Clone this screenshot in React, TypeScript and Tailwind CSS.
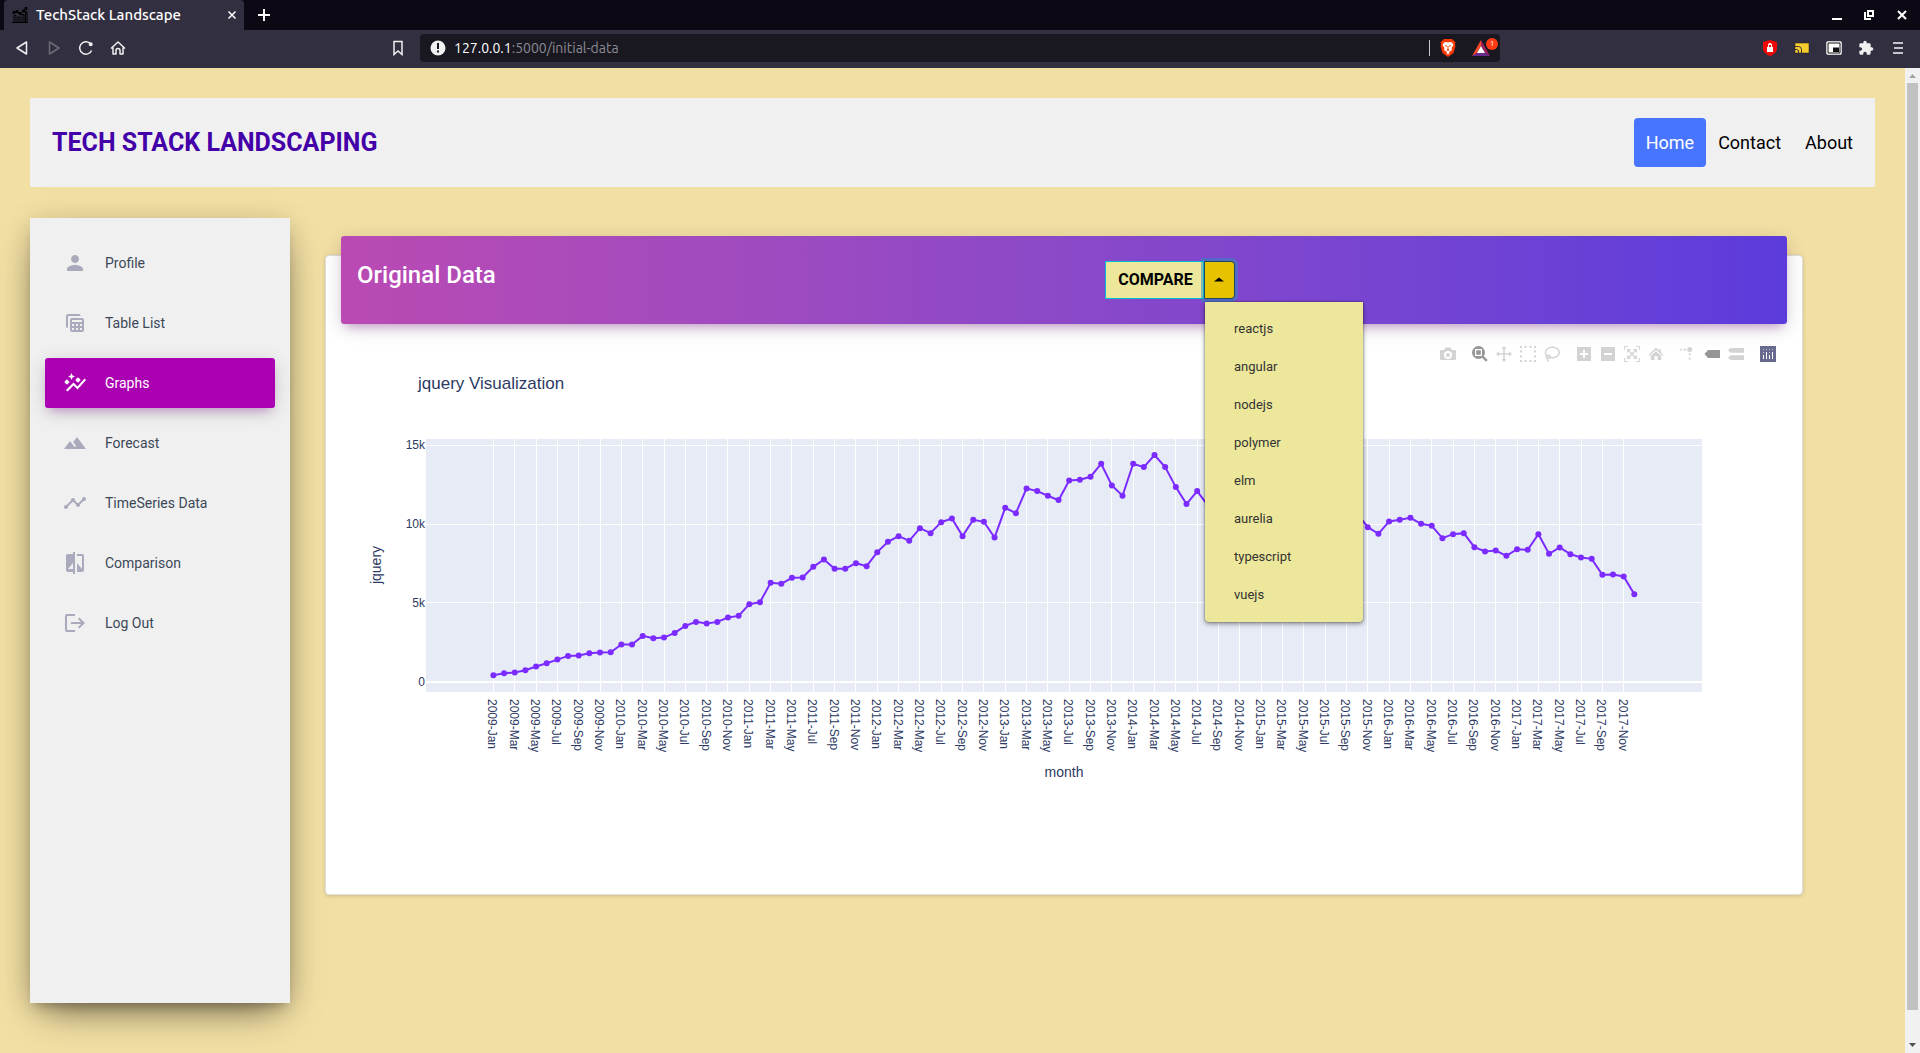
import React from "react";

type IconProps = { className?: string };

const series = [
  410, 536, 579, 727, 960, 1171, 1404, 1637, 1658, 1806, 1849, 1870, 2357, 2357, 2907, 2759, 2801, 3098,
  3542, 3796, 3691, 3796, 4072, 4177, 4918, 5045, 6273, 6210, 6591, 6612, 7289, 7755, 7161, 7161, 7521,
  7330, 8220, 8876, 9236, 8939, 9744, 9426, 10125, 10358, 9236, 10273, 10146, 9151, 11035, 10696, 12263,
  12094, 11797, 11522, 12771, 12813, 13004, 13830, 12454, 11797, 13830, 13618, 14380, 13618, 12348, 11268,
  12094, 11183, 11600, 11900, 11500, 11000, 11400, 11700, 11200, 10900, 11300, 11000, 10700, 11100, 10900,
  10675, 9807, 9384, 10167, 10273, 10400, 10019, 9892, 9109, 9363, 9426, 8537, 8262, 8325, 7987, 8410,
  8368, 9363, 8114, 8516, 8093, 7881, 7796, 6780, 6801, 6674, 5552,
];

const tickMonths = ["Jan", "Mar", "May", "Jul", "Sep", "Nov"];
const xAt = (i: number) => 152.4 + i * 10.663;
const yAt = (v: number) => 347.7 - (v / 5000) * 78.8;

function Chart() {
  return (
    <svg viewBox="0 0 1446 450" className="block w-full" role="img" aria-label="jquery Visualization" fontFamily="'Liberation Sans', Arial, sans-serif" fill="#2d3a64">
      <text x="77" y="55" fontSize="17">jquery Visualization</text>
      <rect x="85" y="105" width="1276" height="253" fill="#e6ebf5" />
      {series.map((_, i) =>
        i % 2 === 0 ? (
          <path key={i} d={`M${Math.floor(xAt(i)) + 0.5} 105V358`} stroke="#fff" />
        ) : null,
      )}
      {[5000, 10000, 15000].map((v) => (
        <path key={v} d={`M85 ${Math.floor(yAt(v)) + 0.5}H1361`} stroke="#fff" />
      ))}
      <path d="M85 348H1361" stroke="#fff" strokeWidth="2" />
      <polyline points={series.map((v, i) => `${xAt(i)},${yAt(v)}`).join(" ")} fill="none" stroke="#7b2bff" strokeWidth="2" />
      {series.map((v, i) => (
        <circle key={i} cx={xAt(i)} cy={yAt(v)} r="3" fill="#7b2bff" />
      ))}
      {["0", "5k", "10k", "15k"].map((label, i) => (
        <text key={label} x="84" y={yAt(i * 5000) + 4} fontSize="12" textAnchor="end">{label}</text>
      ))}
      {series.map((_, i) =>
        i % 2 === 0 ? (
          <text key={i} transform={`translate(${xAt(i) - 5} 365) rotate(90)`} fontSize="12">
            {`${2009 + Math.floor(i / 12)}-${tickMonths[(i % 12) / 2]}`}
          </text>
        ) : null,
      )}
      <text x="723" y="443" fontSize="14" textAnchor="middle">month</text>
      <text transform="translate(40 231) rotate(-90)" fontSize="14" textAnchor="middle">jquery</text>
    </svg>
  );
}

const navIcons: Record<string, React.ReactNode> = {
  Profile: <path d="M12 12c2.21 0 4-1.79 4-4s-1.79-4-4-4-4 1.79-4 4 1.79 4 4 4zm0 2c-2.67 0-8 1.34-8 4v2h16v-2c0-2.66-5.33-4-8-4z" />,
  "Table List": (
    <path fillRule="evenodd" d="M5 3h11a2 2 0 0 1 1.700 2H5v12a2 2 0 0 1-2-2V5a2 2 0 0 1 2-2zM9 7h10a2 2 0 0 1 2 2v10a2 2 0 0 1-2 2H9a2 2 0 0 1-2-2V9a2 2 0 0 1 2-2zM9 9v2h10V9zM9 13v2h2v-2zM13 13v2h2v-2zM17 13v2h2v-2zM9 17v2h2v-2zM13 17v2h2v-2zM17 17v2h2v-2z" />
  ),
  Graphs: (
    <>
      <path d="M14.060 9.940 12 9l2.060-.94L15 6l.94 2.060L18 9l-2.060.94L15 12zM4 14l.94-2.060L7 11l-2.060-.94L4 8l-.94 2.060L1 11l2.060.94zM8.500 9l1.090-2.410L12 5.500 9.590 4.410 8.500 2 7.410 4.410 5 5.500l2.410 1.090zM4.500 20.500l6-6.010 4 4L23 8.930l-1.410-1.410-7.090 7.970-4-4L3 19z" />
      <circle cx="3.800" cy="11" r="2" />
      <circle cx="15" cy="9" r="2" />
    </>
  ),
  Forecast: <path d="m14 6-3.800 5 2.900 3.900-1.500 1.200L7 10l-6 8h22z" />,
  "TimeSeries Data": <path d="M23 8c0 1.100-.9 2-2 2-.18 0-.35-.02-.51-.07l-3.560 3.550c.05.16.07.34.07.52 0 1.100-.9 2-2 2s-2-.9-2-2c0-.18.02-.36.07-.52l-2.550-2.550c-.16.05-.34.07-.52.07s-.36-.02-.52-.07l-4.550 4.560c.05.16.07.33.07.51 0 1.100-.9 2-2 2s-2-.9-2-2 .9-2 2-2c.18 0 .35.02.51.07l4.560-4.550C8.020 9.360 8 9.180 8 9c0-1.100.9-2 2-2s2 .9 2 2c0 .18-.02.36-.07.52l2.550 2.550c.16-.05.34-.07.52-.07s.36.02.52.07l3.550-3.560C19.020 8.350 19 8.180 19 8c0-1.100.9-2 2-2s2 .9 2 2z" />,
  Comparison: <path d="M10 3H5c-1.100 0-2 .9-2 2v14c0 1.100.9 2 2 2h5v2h2V1h-2v2zm0 15H5l5-6v6zm9-15h-5v2h5v13l-5-6v9h5c1.100 0 2-.9 2-2V5c0-1.100-.9-2-2-2z" />,
  "Log Out": <path d="M4 3h8v2H4v14h8v2H4a2 2 0 0 1-2-2V5a2 2 0 0 1 2-2zM8 11h10l-3-3 1.400-1.400L22 12l-5.600 5.400L15 16l3-3H8z" />,
};

const navItems = ["Profile", "Table List", "Graphs", "Forecast", "TimeSeries Data", "Comparison", "Log Out"];

function Sidebar() {
  return (
    <nav aria-label="Sections" className="flex h-[785px] w-[260px] shrink-0 flex-col gap-2.5 bg-[#f0f0f0] px-[15px] pt-5 shadow-[0_16px_38px_-12px_rgba(0,0,0,0.56),0_4px_25px_0_rgba(0,0,0,0.12),0_8px_10px_-5px_rgba(0,0,0,0.2)]">
      {navItems.map((name) => {
        const active = name === "Graphs";
        return (
          <a
            key={name}
            href="#"
            aria-current={active ? "page" : undefined}
            className={
              active
                ? "flex h-[50px] items-center gap-[15px] rounded-[3px] bg-[#ab00b1] pl-[15px] text-sm text-white shadow-[0_4px_20px_0_rgba(0,0,0,0.14),0_7px_10px_-5px_rgba(156,39,176,0.4)]"
                : "flex h-[50px] items-center gap-[15px] rounded-[3px] pl-[15px] text-sm text-[#3c4858]"
            }
          >
            <span className="flex w-[30px] justify-center">
              <svg viewBox="0 0 24 24" className={active ? "size-6 fill-white" : "size-6 fill-[#a9abbd]"} aria-hidden="true">
                {navIcons[name]}
              </svg>
            </span>
            {name}
          </a>
        );
      })}
    </nav>
  );
}

const modebarGroups: { label: string; dark?: boolean; art: React.ReactNode }[][] = [
  [{ label: "Download plot", art: <path fillRule="evenodd" d="M1 4h3l1.500-2.500h5L12 4h3a1 1 0 0 1 1 1v8a1 1 0 0 1-1 1H1a1 1 0 0 1-1-1V5a1 1 0 0 1 1-1zM8 5a4 4 0 1 0 0 8 4 4 0 0 0 0-8zM8 7a2 2 0 1 1 0 4 2 2 0 0 1 0-4z" /> }],
  [
    { label: "Zoom", dark: true, art: <><path d="M10.500 10.500 14.800 14.800" stroke="currentColor" strokeWidth="2.400" /><path fillRule="evenodd" d="M6.500 0a6.500 6.500 0 1 1 0 13 6.500 6.500 0 0 1 0-13zM3 3v7h7V3zM4.200 4.200h4.600v4.600H4.200z" /></> },
    { label: "Pan", art: <path d="m8 0 2.500 3H8.800v4.200H13V5.500L16 8l-3 2.500V8.800H8.800V13h1.700L8 16l-2.500-3h1.700V8.800H3v1.700L0 8l3-2.500v1.700h4.200V3H5.500z" /> },
    { label: "Box select", art: <path d="M0 0h2v2H0zM4.500 0h2v2h-2zM9.500 0h2v2h-2zM14 0h2v2h-2zM0 4.500h2v2H0zM14 4.500h2v2h-2zM0 9.500h2v2H0zM14 9.500h2v2h-2zM0 14h2v2H0zM4.500 14h2v2h-2zM9.500 14h2v2h-2zM14 14h2v2h-2z" /> },
    { label: "Lasso select", art: <><ellipse cx="8.300" cy="6.500" rx="6.900" ry="5.300" fill="none" stroke="currentColor" strokeWidth="1.500" /><path d="M3 9.500c3-1.500 4.500 2 2 3-2.500.8-3.500-1.500-2-3zM3.500 12.300c-.5 1.500 0 2.700 1.300 3" fill="none" stroke="currentColor" strokeWidth="1.300" /></> },
  ],
  [
    { label: "Zoom in", art: <path fillRule="evenodd" d="M1 1h14v14H1zM7 4v3H4v2h3v3h2V9h3V7H9V4z" /> },
    { label: "Zoom out", art: <path fillRule="evenodd" d="M1 1h14v14H1zM4 7v2h8V7z" /> },
    { label: "Autoscale", art: <><path d="M.5 4V.5H4M12 .5h3.500V4M15.500 12v3.500H12M4 15.500H.5V12" fill="none" stroke="currentColor" /><path d="m4.500 4.500 7 7m0-7-7 7" stroke="currentColor" strokeWidth="1.500" /><path d="M3 3h4L3 7zM13 3v4L9 3zM13 13H9l4-4zM3 13V9l4 4z" /></> },
    { label: "Reset axes", art: <path d="M8 1.500 11.500 5V3H13v3.500L15.500 9l-.8.8L8 4 1.300 9.800.5 9zM8 5.200l5.200 4.600V14H9.500v-4h-3v4H2.800V9.800z" /> },
  ],
  [
    { label: "Toggle spike lines", art: <><circle cx="9.700" cy="3.500" r="2.500" /><path d="M0 2.700h1.700v1.700H0zM3.500 2.700H6v1.700H3.500zM8.800 7.300h1.800v2H8.800zM8.800 11.800h1.800v2H8.800z" /></> },
    { label: "Show closest data", dark: true, art: <path d="M.5 8 4 4h12v8H4z" /> },
    { label: "Compare data", art: <path d="M0 4.300 2.500 2H16v4.700H2.500zM0 11.700l2.500-2.400H16V14H2.500z" /> },
  ],
];

function Modebar() {
  return (
    <div className="flex items-center justify-end gap-4 pr-[11px] text-[#d3d3d3]">
      {modebarGroups.map((group, g) => (
        <div key={g} className="flex gap-2">
          {group.map((b) => (
            <button key={b.label} type="button" aria-label={b.label} className={b.dark ? "text-[#969696]" : ""}>
              <svg viewBox="0 0 16 16" className="size-4 fill-current">{b.art}</svg>
            </button>
          ))}
        </div>
      ))}
      <a href="#" aria-label="Produced with Plotly">
        <svg viewBox="0 0 16 16" className="size-4">
          <path fill="#69698f" d="M0 0h16v16H0z" />
          <path d="M3 9h1v4H3zM6 6h1v7H6zM9 9h1v4H9zM12 6h1v7h-1z" fill="#fff" />
          <path d="M3 3h1v1H3zM6 3h1v1H6zM9 3h1v1H9zM12 3h1v1h-1zM3 6h1v1H3zM9 6h1v1H9z" fill="#9fd6df" />
        </svg>
      </a>
    </div>
  );
}

function Compare() {
  const options = ["reactjs", "angular", "nodejs", "polymer", "elm", "aurelia", "typescript", "vuejs"];
  return (
    <div className="relative flex h-[38px] w-[130px]">
      <button type="button" className="w-[99px] border border-[#00bcd4] bg-[#ede79b] pl-0.5 text-base font-bold text-black">COMPARE</button>
      <button type="button" aria-label="Choose a technology" aria-expanded="true" className="flex flex-1 items-center justify-center rounded-r-[4px] border border-[#164a5c] bg-[#e6c200] pr-0.5 pb-0.5 shadow-[0_0_0_3px_rgba(38,143,190,0.5)]">
        <svg viewBox="0 0 10 5" className="h-[5px] w-2.5"><path d="M0 4.500 5 .5l5 4z" /></svg>
      </button>
      <ul className="absolute top-[41px] left-[100px] z-10 flex w-[158px] flex-col rounded-b-[4px] bg-[#ede79b] px-[29px] py-2 text-[13px] leading-[38px] text-[#333] shadow-[0_2px_5px_rgba(0,0,0,0.4),0_0_2px_rgba(0,0,0,0.5)]">
        {options.map((o) => (
          <li key={o}><a href="#">{o}</a></li>
        ))}
      </ul>
    </div>
  );
}

function ChromeIcon({ children, className = "size-4" }: IconProps & { children: React.ReactNode }) {
  return (
    <svg viewBox="0 0 16 16" className={className} fill="none" stroke="currentColor" strokeWidth="1.500" strokeLinejoin="round" aria-hidden="true">
      {children}
    </svg>
  );
}

function BrowserChrome() {
  return (
    <header className="bg-[#0c0915] text-white" style={{ fontFamily: "Ubuntu, 'Noto Sans', sans-serif" }}>
      <div className="flex h-[30px] items-center pl-1">
        <div className="flex h-full w-60 items-center gap-2 rounded-t-[4px] bg-[#322f40] pr-1 pl-2">
          <svg viewBox="0 0 16 16" className="size-4" fill="none" stroke="#000" aria-hidden="true">
            <path d="M0 15.500h16M2 15V8.500h2V15M6 15v-5h2v5M10 15V7.500h2V15M13.500 15V4.500h1.500V15M1.500 6 5 5l3 2 3.500-3 2.500-2.500" />
            <path d="M1 4.500h2v2H1zM4 3.500h2v2H4zM7 5.500h2v2H7zM10.500 3h2v2h-2zM13 .5h2v2h-2z" fill="#000" />
          </svg>
          <span className="flex-1 text-[15px] font-medium">TechStack Landscape</span>
          <button type="button" aria-label="Close tab"><ChromeIcon><path d="m4.500 4.500 7 7m0-7-7 7" /></ChromeIcon></button>
        </div>
        <button type="button" aria-label="New tab" className="ml-3"><ChromeIcon><path strokeWidth="2" d="M8 2v12M2 8h12" /></ChromeIcon></button>
        <div className="ml-auto flex gap-4 pr-2.5">
          <button type="button" aria-label="Minimize"><ChromeIcon><path strokeWidth="2" d="M2 12h10" /></ChromeIcon></button>
          <button type="button" aria-label="Restore"><ChromeIcon><path strokeWidth="2" strokeLinejoin="miter" d="M6 4h5v5H6zM3 5v7h6" /></ChromeIcon></button>
          <button type="button" aria-label="Close"><ChromeIcon><path strokeWidth="2" d="m4 4 8 8m0-8-8 8" /></ChromeIcon></button>
        </div>
      </div>
      <div className="flex h-[38px] items-center bg-[#322f40] pb-0.5 text-[#f0f0f0]">
        <div className="flex gap-4 pl-3.5">
          <button type="button" aria-label="Back"><ChromeIcon><path d="M12.500 2v12L3 8z" /></ChromeIcon></button>
          <button type="button" aria-label="Forward" className="text-[#6c6a77]"><ChromeIcon><path d="M3.500 2v12L13 8z" /></ChromeIcon></button>
          <button type="button" aria-label="Reload"><ChromeIcon><path d="M13.600 10.500A6.200 6.200 0 1 1 12 3.300" /><circle cx="12.700" cy="4.300" r="1.300" fill="currentColor" /></ChromeIcon></button>
          <button type="button" aria-label="Home"><ChromeIcon><path d="M1 8.500 8 2l7 6.500M3 7.500V14h3v-3.500a2 2 0 0 1 4 0V14h3V7.500" /></ChromeIcon></button>
        </div>
        <button type="button" aria-label="Bookmark" className="ml-[264px]"><ChromeIcon><path strokeLinejoin="miter" d="M4 1.500h8v13L8 11l-4 3.500z" /></ChromeIcon></button>
        <div className="ml-3.5 flex h-7 w-[1080px] items-center rounded-[4px] bg-[#191821] pr-0.5 pl-2.5">
          <svg viewBox="0 0 16 16" className="mr-2 size-4" aria-hidden="true"><circle cx="8" cy="8" r="7.500" fill="#f0f0f0" /><path d="M7 3h2v6H7zM7 10.500h2v2H7z" fill="#191821" /></svg>
          <span className="flex-1 text-[14px] text-[#8b8a92]"><span className="text-white">127.0.0.1</span>:5000/initial-data</span>
          <span className="mr-2.5 h-4 w-px bg-[#c9c9cc]" />
          <svg viewBox="0 0 16 18" className="mr-4 h-[18px] w-4" aria-hidden="true">
            <path fill="#fb3b06" d="M4 0h8l2 2 1.500 1-.5 2 .5 2-2 7L8 18l-5.500-4-2-7L1 5 .5 3 2 2z" />
            <path fill="#fff" d="M4 3.500 6 3l2 .5L10 3l2 .5 1.500 2.500-2 3 .5 2-3 2 .5 1L8 15.500 6.500 14l.5-1-3-2 .5-2-2-3z" />
            <path fill="#fb3b06" d="m4.500 6 2.500.5L6.500 8zM11.500 6 9 6.500l.5 1.500zM7.500 7h1v3l1 1L8 12l-1.500-1 1-1z" />
          </svg>
          <span className="relative h-5 w-[26px]">
            <svg viewBox="0 0 18 16" className="absolute top-0.5 left-0 h-4 w-[18px]" aria-hidden="true">
              <path fill="#ff4724" d="M9 0 0 16l5-3 4-7z" /><path fill="#9e1f63" d="m9 0 9 16-5-3-4-7z" /><path fill="#662d91" d="M0 16h18l-5-3H5z" /><path fill="#fff" d="m9 6 4 7H5z" />
            </svg>
            <span className="absolute top-0 right-0 flex size-3 items-center justify-center rounded-full bg-[#fb3b16] text-[8px] leading-3 text-white">1</span>
          </span>
        </div>
        <div className="ml-auto flex items-center gap-4 pr-3.5">
          <svg viewBox="0 0 16 16" className="size-4" aria-hidden="true"><path fill="#f00808" d="M8 0 1 2v6c0 4 3 6.500 7 8 4-1.500 7-4 7-8V2z" /><path fill="#fff" fillRule="evenodd" d="M5 7h1V5a2 2 0 0 1 4 0v2h1v5H5zM7 7h2V5H7z" /></svg>
          <svg viewBox="0 0 16 16" className="size-4" aria-hidden="true"><path fill="#f5cd2d" stroke="#1f1d18" strokeWidth=".5" d="M1 3h14v10H1z" /><path d="M1 6.500h3.500a3 3 0 0 1 3 3V13M1 9.500h1.500A2 2 0 0 1 4.500 11.500V13M4.500 10.500V13" fill="none" stroke="#322f40" /></svg>
          <svg viewBox="0 0 16 16" className="size-4" aria-hidden="true"><rect x=".5" y="1.500" width="15" height="13" rx="1.500" fill="#fff" stroke="#cfcfcf" /><path d="M2 3h12v10H2z" fill="none" stroke="#111" /><path fill="#111" d="M7 7.500h6V12H7z" /></svg>
          <svg viewBox="0 0 24 24" className="size-4 fill-current" aria-hidden="true"><path d="M20.500 11H19V7c0-1.100-.9-2-2-2h-4V3.500a2.500 2.500 0 0 0-5 0V5H4c-1.100 0-2 .9-2 2v3.800h1.500a2.700 2.700 0 0 1 0 5.400H2V20c0 1.100.9 2 2 2h3.800v-1.500a2.700 2.700 0 0 1 5.400 0V22H17c1.100 0 2-.9 2-2v-4h1.500a2.500 2.500 0 0 0 0-5z" /></svg>
          <button type="button" aria-label="Menu" className="text-[#c5c4ca]"><ChromeIcon><path strokeWidth="2" d="M3 3h10M4 8h9M3 13h10" /></ChromeIcon></button>
        </div>
      </div>
    </header>
  );
}

function ScrollBar() {
  return (
    <div className="flex w-[15px] shrink-0 flex-col items-center bg-[#f1f1f1]" aria-hidden="true">
      <svg viewBox="0 0 15 15" className="size-[15px] shrink-0"><path fill="#a3a3a3" d="m4 10 3.500-4 3.500 4z" /></svg>
      <div className="w-[11px] flex-1 bg-[#c1c1c1]" />
      <div className="h-7" />
      <svg viewBox="0 0 15 15" className="size-[15px] shrink-0"><path fill="#505050" d="m4 5 3.500 4L11 5z" /></svg>
    </div>
  );
}

export default function App() {
  return (
    <div className="flex min-h-screen flex-col bg-[#f2dfa4]" style={{ fontFamily: "Roboto, sans-serif" }}>
      <BrowserChrome />
      <div className="flex flex-1">
        <div className="min-w-0 flex-1 px-[30px] pt-[30px]">
          <div className="flex h-[89px] items-center justify-between bg-[#f0f0f0] px-[22px]">
            <h1 className="text-[25px] font-bold text-[#4400a8]">TECH STACK LANDSCAPING</h1>
            <nav aria-label="Site" className="-mr-3 flex text-lg leading-[27px] text-black">
              <a href="#" className="rounded-[4px] bg-[#4775ff] px-3 py-[11px] text-white">Home</a>
              <a href="#" className="px-3 py-[11px]">Contact</a>
              <a href="#" className="px-3 py-[11px]">About</a>
            </nav>
          </div>
          <div className="flex gap-[35px] pt-[31px]">
            <Sidebar />
            <main className="mt-[37px] mr-[72px] h-[640px] min-w-0 flex-1 rounded-[4px] border border-[#dedede] bg-white px-[15px] shadow-[0_1px_4px_rgba(0,0,0,0.14)]">
              <div className="-mt-5 flex h-[88px] items-start justify-between rounded-[3px] bg-linear-to-r from-[#ba4ab3] to-[#5c3bdc] pt-[25px] pr-[552px] pl-4 shadow-[0_4px_20px_0_rgba(0,0,0,0.14),0_7px_10px_-5px_rgba(156,39,176,0.4)]">
                <h2 className="text-2xl leading-7 font-medium text-white">Original Data</h2>
                <Compare />
              </div>
              <div className="pt-[22px]">
                <Modebar />
                <div className="-mt-7">
                  <Chart />
                </div>
              </div>
            </main>
          </div>
        </div>
        <ScrollBar />
      </div>
    </div>
  );
}
